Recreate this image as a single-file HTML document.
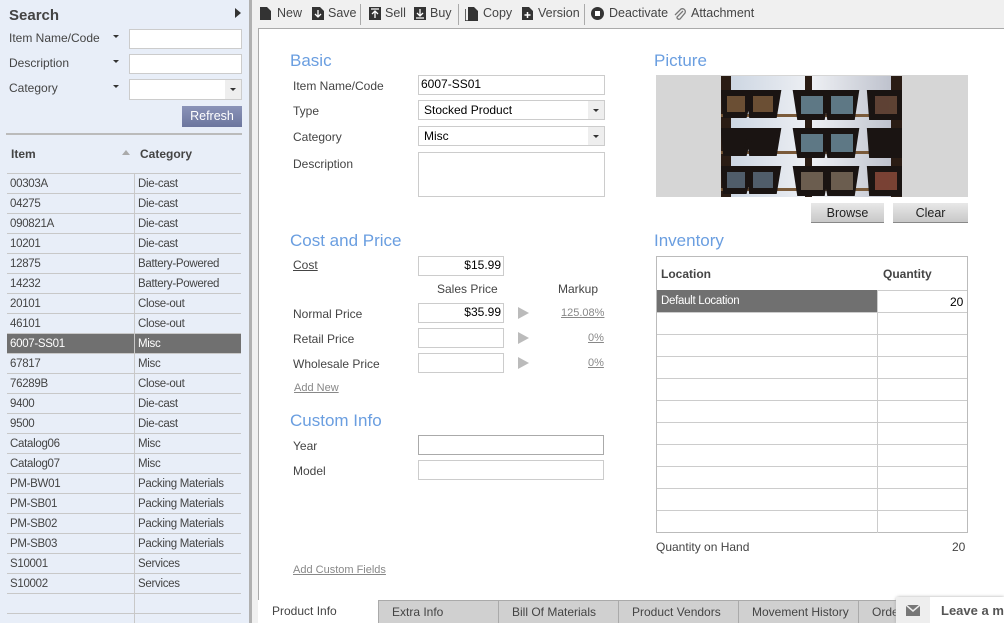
<!DOCTYPE html>
<html><head><meta charset="utf-8"><style>
*{box-sizing:border-box;margin:0;padding:0}
html,body{width:1004px;height:623px;overflow:hidden}
body{position:relative;background:#f0f0f0;font-family:"Liberation Sans",Arial,sans-serif;font-size:12px;color:#444}
.a{position:absolute}
.inp{position:absolute;background:#fff;border:1px solid #ccc;height:20px}
.lbl{position:absolute;font-size:12px;color:#444}
.h{position:absolute;font-size:17px;color:#6a9ee0}
.row{position:absolute;left:7px;width:234px;height:20px;border-bottom:1px solid #c8c8c8;font-size:11.5px;color:#444;letter-spacing:-0.3px}
.row span{position:absolute;top:4px}
.row .c1{left:3px}.row .c2{left:131px}
.row .dv{position:absolute;left:127px;top:0;width:1px;height:20px;background:#c8c8c8}
.tb{position:absolute;top:6px;font-size:12.5px;color:#444}
.sep{position:absolute;top:4px;width:1px;height:21px;background:#aaa}
.tab{position:absolute;top:600px;height:23px;width:120px;background:#d0d0d0;border-left:1px solid #aaa;border-top:1px solid #aaa;font-size:12px;color:#444;padding:4px 0 0 13px;overflow:hidden;white-space:nowrap}
.dd{position:absolute;right:0;top:0;width:16px;height:100%;background:#eee}
.dd:after{content:"";position:absolute;left:5px;top:8px;border:3px solid transparent;border-top:3px solid #333}
.ic{position:absolute;top:7px}
</style></head><body>
<div class="a" style="left:0;top:0;width:249px;height:623px;background:#e8eef8"></div>
<div class="a" style="left:249px;top:0;width:3px;height:623px;background:#b0b0b0"></div>
<div class="a" style="left:9px;top:7px;font-size:15px;font-weight:bold;color:#444">Search</div>
<div class="a" style="left:235px;top:8px;border:5px solid transparent;border-left:6px solid #333;border-right:0"></div>
<div class="lbl" style="left:9px;top:31px">Item Name/Code</div>
<div class="lbl" style="left:9px;top:56px">Description</div>
<div class="lbl" style="left:9px;top:81px">Category</div>
<div class="a" style="left:113px;top:35px;border:3px solid transparent;border-top:3px solid #333"></div>
<div class="a" style="left:113px;top:60px;border:3px solid transparent;border-top:3px solid #333"></div>
<div class="a" style="left:113px;top:85px;border:3px solid transparent;border-top:3px solid #333"></div>
<div class="inp" style="left:129px;top:29px;width:113px;height:20px"></div>
<div class="inp" style="left:129px;top:54px;width:113px;height:20px"></div>
<div class="inp" style="left:129px;top:79px;width:113px;height:21px"><div class="dd"></div></div>
<div class="a" style="left:182px;top:106px;width:60px;height:21px;background:linear-gradient(#8a93b8,#6c769e);color:#fff;font-size:12.5px;text-align:center;padding-top:3px">Refresh</div>
<div class="a" style="left:6px;top:133px;width:236px;height:2px;background:#bbb"></div>
<div class="a" style="left:11px;top:147px;font-weight:bold;font-size:12px">Item</div>
<div class="a" style="left:122px;top:150px;border:4px solid transparent;border-bottom:5px solid #aaa;border-top:0"></div>
<div class="a" style="left:140px;top:147px;font-weight:bold;font-size:12px">Category</div>
<div class="a" style="left:7px;top:173px;width:234px;height:1px;background:#c8c8c8"></div>
<div id="rows"></div>
<svg class="ic" style="left:260px" width="11" height="13"><path d="M0 0H7L11 4V13H0Z" fill="#333"/></svg>
<div class="tb" style="left:277px">New</div>
<svg class="ic" style="left:312px" width="12" height="13"><path d="M0 0H8L12 4V13H0Z" fill="#333"/><path d="M6 3V9M3 7L6 10L9 7" stroke="#fff" stroke-width="1.3" fill="none"/></svg>
<div class="tb" style="left:328px">Save</div>
<div class="sep" style="left:360px"></div>
<svg class="ic" style="left:369px" width="12" height="13"><rect width="12" height="13" fill="#333"/><path d="M2 2H10M6 11V4M3 7L6 4L9 7" stroke="#fff" stroke-width="1.3" fill="none"/></svg>
<div class="tb" style="left:385px">Sell</div>
<svg class="ic" style="left:414px" width="12" height="13"><rect width="12" height="13" fill="#333"/><path d="M2 11H10M6 2V9M3 6L6 9L9 6" stroke="#fff" stroke-width="1.3" fill="none"/></svg>
<div class="tb" style="left:430px">Buy</div>
<div class="sep" style="left:458px"></div>
<svg class="ic" style="left:465px" width="13" height="14"><path d="M3 0H9L13 4V14H3Z" fill="#333"/><path d="M0 2V14H10" stroke="#333" fill="none" stroke-width="1.5"/></svg>
<div class="tb" style="left:483px">Copy</div>
<svg class="ic" style="left:522px" width="11" height="13"><path d="M0 0H7L11 4V13H0Z" fill="#333"/><path d="M5.5 5V11M2.5 8H8.5" stroke="#fff" stroke-width="1.5"/></svg>
<div class="tb" style="left:538px">Version</div>
<div class="sep" style="left:584px"></div>
<svg class="ic" style="left:591px" width="13" height="13"><circle cx="6.5" cy="6.5" r="6.5" fill="#333"/><rect x="4" y="4" width="5" height="5" fill="#fff"/></svg>
<div class="tb" style="left:609px">Deactivate</div>
<svg class="ic" style="left:673px" width="14" height="14"><path d="M10 4L4 10A2 2 0 0 0 7 12L12 6A3 3 0 0 0 8 2L2 8" stroke="#777" stroke-width="1.3" fill="none"/></svg>
<div class="tb" style="left:691px">Attachment</div>
<div class="a" style="left:258px;top:28px;width:760px;height:600px;background:#fff;border:1px solid #aaa"></div>
<div class="h" style="left:290px;top:51px">Basic</div>
<div class="lbl" style="left:293px;top:79px">Item Name/Code</div>
<div class="lbl" style="left:293px;top:104px">Type</div>
<div class="lbl" style="left:293px;top:130px">Category</div>
<div class="lbl" style="left:293px;top:157px">Description</div>
<div class="inp" style="left:418px;top:75px;width:187px;color:#000;padding:1px 0 0 2px">6007-SS01</div>
<div class="inp" style="left:418px;top:100px;width:187px;color:#000;padding:2px 0 0 5px">Stocked Product<div class="dd"></div></div>
<div class="inp" style="left:418px;top:126px;width:187px;color:#000;padding:2px 0 0 5px">Misc<div class="dd"></div></div>
<div class="inp" style="left:418px;top:152px;width:187px;height:45px"></div>
<div class="h" style="left:290px;top:231px">Cost and Price</div>
<div class="lbl" style="left:293px;top:258px;text-decoration:underline">Cost</div>
<div class="inp" style="left:418px;top:256px;width:86px;color:#000;text-align:right;padding:1px 2px 0 0">$15.99</div>
<div class="lbl" style="left:437px;top:282px">Sales Price</div>
<div class="lbl" style="left:558px;top:282px">Markup</div>
<div class="lbl" style="left:293px;top:307px">Normal Price</div>
<div class="lbl" style="left:293px;top:332px">Retail Price</div>
<div class="lbl" style="left:293px;top:357px">Wholesale Price</div>
<div class="inp" style="left:418px;top:303px;width:86px;color:#000;text-align:right;padding:1px 2px 0 0">$35.99</div>
<div class="inp" style="left:418px;top:328px;width:86px"></div>
<div class="inp" style="left:418px;top:353px;width:86px"></div>
<div class="a" style="left:518px;top:307px;border:6px solid transparent;border-left:11px solid #bbb;border-right:0"></div>
<div class="a" style="left:518px;top:332px;border:6px solid transparent;border-left:11px solid #bbb;border-right:0"></div>
<div class="a" style="left:518px;top:357px;border:6px solid transparent;border-left:11px solid #bbb;border-right:0"></div>
<div class="lbl" style="left:561px;top:307px;color:#888;text-decoration:underline;font-size:11px">125.08%</div>
<div class="lbl" style="left:588px;top:332px;color:#888;text-decoration:underline;font-size:11px">0%</div>
<div class="lbl" style="left:588px;top:357px;color:#888;text-decoration:underline;font-size:11px">0%</div>
<div class="lbl" style="left:294px;top:382px;font-size:11px;color:#888;text-decoration:underline">Add New</div>
<div class="h" style="left:290px;top:411px">Custom Info</div>
<div class="lbl" style="left:293px;top:439px">Year</div>
<div class="lbl" style="left:293px;top:464px">Model</div>
<div class="inp" style="left:418px;top:435px;width:186px;border-color:#aaa"></div>
<div class="inp" style="left:418px;top:460px;width:186px"></div>
<div class="lbl" style="left:293px;top:564px;font-size:11px;color:#888;text-decoration:underline">Add Custom Fields</div>
<div class="h" style="left:654px;top:51px">Picture</div>
<div class="a" style="left:656px;top:75px;width:312px;height:122px;background:#d6d6d6"></div>
<svg class="a" style="left:721px;top:76px" width="181" height="121">
<defs><linearGradient id="g" x1="0" x2="1"><stop offset="0" stop-color="#c9d3e0"/><stop offset="0.5" stop-color="#eef0f4"/><stop offset="1" stop-color="#b8bcc8"/></linearGradient></defs>
<rect width="181" height="121" fill="url(#g)"/>
<rect x="0" y="0" width="10" height="121" fill="#2a1c14"/>
<rect x="84" y="0" width="7" height="121" fill="#2a1c14"/>
<rect x="170" y="0" width="11" height="121" fill="#2a1c14"/>
<rect x="0" y="38" width="181" height="3" fill="#7a5a3a"/><rect x="0" y="75" width="181" height="3" fill="#7a5a3a"/><rect x="0" y="112" width="181" height="3" fill="#7a5a3a"/>
<g fill="#1a1412" stroke="#1a1412" stroke-width="4">
<path d="M2 16H58L54 40H30L28 24L24 40H4Z"/><path d="M74 16H136L132 42H108L105 26L102 42H78Z"/><path d="M148 16H181V42H150Z"/>
<path d="M2 54H58L54 78H30L28 62L24 78H4Z"/><path d="M74 54H136L132 80H108L105 64L102 80H78Z"/><path d="M148 54H181V80H150Z"/>
<path d="M2 92H58L54 116H30L28 100L24 116H4Z"/><path d="M74 92H136L132 118H108L105 102L102 118H78Z"/><path d="M148 92H181V118H150Z"/>
</g>
<g opacity="0.85"><rect x="6" y="20" width="18" height="16" fill="#7a5a3a"/><rect x="32" y="20" width="20" height="16" fill="#7a5a3a"/>
<rect x="80" y="20" width="22" height="18" fill="#6a8a9a"/><rect x="110" y="20" width="22" height="18" fill="#6a8a9a"/>
<rect x="80" y="58" width="22" height="18" fill="#6a8a9a"/><rect x="110" y="58" width="22" height="18" fill="#6a8a9a"/>
<rect x="80" y="96" width="22" height="18" fill="#7a6a5a"/><rect x="110" y="96" width="22" height="18" fill="#7a6a5a"/>
<rect x="6" y="96" width="18" height="16" fill="#5a6a7a"/><rect x="32" y="96" width="20" height="16" fill="#5a6a7a"/>
<rect x="154" y="20" width="22" height="18" fill="#6a4a3a"/><rect x="154" y="96" width="22" height="18" fill="#8a4a3a"/></g>
</svg>
<div class="a" style="left:811px;top:203px;width:73px;height:20px;background:linear-gradient(#e8e8e8,#c8c8c8);border-bottom:1px solid #888;text-align:center;font-size:12.5px;color:#222;padding-top:3px">Browse</div>
<div class="a" style="left:893px;top:203px;width:75px;height:20px;background:linear-gradient(#e8e8e8,#c8c8c8);border-bottom:1px solid #888;text-align:center;font-size:12.5px;color:#222;padding-top:3px">Clear</div>
<div class="h" style="left:654px;top:231px">Inventory</div>
<div class="a" style="left:656px;top:256px;width:312px;height:277px;border:1px solid #bbb" id="inv"></div>
<div class="a" style="left:661px;top:267px;font-weight:bold;font-size:12px">Location</div>
<div class="a" style="left:883px;top:267px;font-weight:bold;font-size:12px">Quantity</div>
<div class="a" style="left:657px;top:290px;width:220px;height:22px;background:#707070;color:#fff;font-size:11.5px;padding:5px 0 0 4px;letter-spacing:-0.3px">Default Location</div>
<div class="a" style="left:950px;top:295px;font-size:12px;color:#000">20</div>
<div class="lbl" style="left:656px;top:540px">Quantity on Hand</div>
<div class="lbl" style="left:952px;top:540px">20</div>
<div class="a" style="left:258px;top:600px;width:120px;height:23px;background:#fff;font-size:12px;padding:4px 0 0 14px">Product Info</div>
<div class="tab" style="left:378px">Extra Info</div>
<div class="tab" style="left:498px">Bill Of Materials</div>
<div class="tab" style="left:618px">Product Vendors</div>
<div class="tab" style="left:738px">Movement History</div>
<div class="tab" style="left:858px">Orders</div>
<div class="a" style="left:896px;top:597px;width:108px;height:26px;background:#fff;border-radius:3px 0 0 0;box-shadow:0 0 3px #aaa"></div>
<div class="a" style="left:896px;top:597px;width:34px;height:26px;background:#eee"></div>
<svg class="a" style="left:906px;top:605px" width="14" height="11"><rect width="14" height="11" fill="#777"/><path d="M0 0L7 6L14 0" stroke="#eee" stroke-width="1.5" fill="none"/></svg>
<div class="a" style="left:941px;top:603px;font-size:13px;font-weight:bold;color:#555;white-space:nowrap">Leave a m</div>
<script>
var d=[["00303A","Die-cast"],["04275","Die-cast"],["090821A","Die-cast"],["10201","Die-cast"],["12875","Battery-Powered"],["14232","Battery-Powered"],["20101","Close-out"],["46101","Close-out"],["6007-SS01","Misc"],["67817","Misc"],["76289B","Close-out"],["9400","Die-cast"],["9500","Die-cast"],["Catalog06","Misc"],["Catalog07","Misc"],["PM-BW01","Packing Materials"],["PM-SB01","Packing Materials"],["PM-SB02","Packing Materials"],["PM-SB03","Packing Materials"],["S10001","Services"],["S10002","Services"],["",""],["",""]];
var h="";d.forEach(function(r,i){var sel=i==8;h+='<div class="row" style="top:'+(174+i*20)+'px;'+(sel?'background:#707070;color:#fff;':'')+'"><span class="c1">'+r[0]+'</span><div class="dv"></div><span class="c2">'+r[1]+'</span></div>';});
document.getElementById("rows").innerHTML=h;
var g="";for(var i=0;i<11;i++){g+='<div style="position:absolute;left:0;top:'+(33+i*22)+'px;width:310px;height:1px;background:#ccc"></div>';}
g+='<div style="position:absolute;left:220px;top:33px;width:1px;height:243px;background:#ccc"></div>';
document.getElementById("inv").innerHTML=g;
</script>
</body></html>
